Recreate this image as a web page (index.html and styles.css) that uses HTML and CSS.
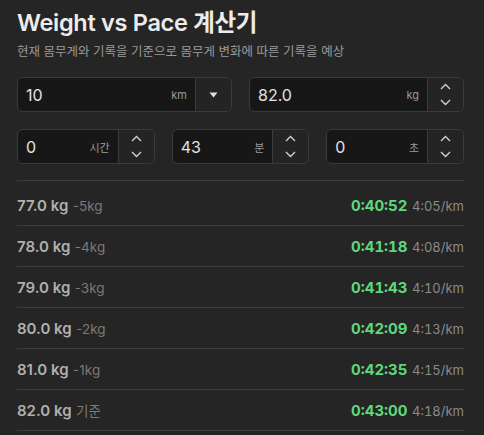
FILE: index.html
```html
<!DOCTYPE html>
<html lang="ko">
<head>
<meta charset="utf-8">
<link rel="stylesheet" href="styles.css">
</head>
<body>
<main class="app">
  <h1 class="title">Weight vs Pace 계산기</h1>
  <p class="subtitle">현재 몸무게와 기록을 기준으로 몸무게 변화에 따른 기록을 예상</p>

  <div class="row two">
    <div class="field">
      <div class="input"><span class="val">10</span><span class="unit">km</span></div>
      <div class="side"><svg width="9" height="6" viewBox="0 0 9 6"><path d="M0.5 0.5h8l-4 5z" fill="#e0e0e0"/></svg></div>
    </div>
    <div class="field">
      <div class="input"><span class="val">82.0</span><span class="unit">kg</span></div>
      <div class="side spin">
        <svg width="11" height="7" viewBox="0 0 11 7"><path d="M1 6l4.5-4.5L10 6" fill="none" stroke="#d0d0d0" stroke-width="1.4"/></svg>
        <svg width="11" height="7" viewBox="0 0 11 7"><path d="M1 1l4.5 4.5L10 1" fill="none" stroke="#d0d0d0" stroke-width="1.4"/></svg>
      </div>
    </div>
  </div>

  <div class="row three">
    <div class="field">
      <div class="input"><span class="val">0</span><span class="unit">시간</span></div>
      <div class="side spin">
        <svg width="11" height="7" viewBox="0 0 11 7"><path d="M1 6l4.5-4.5L10 6" fill="none" stroke="#d0d0d0" stroke-width="1.4"/></svg>
        <svg width="11" height="7" viewBox="0 0 11 7"><path d="M1 1l4.5 4.5L10 1" fill="none" stroke="#d0d0d0" stroke-width="1.4"/></svg>
      </div>
    </div>
    <div class="field">
      <div class="input"><span class="val">43</span><span class="unit">분</span></div>
      <div class="side spin">
        <svg width="11" height="7" viewBox="0 0 11 7"><path d="M1 6l4.5-4.5L10 6" fill="none" stroke="#d0d0d0" stroke-width="1.4"/></svg>
        <svg width="11" height="7" viewBox="0 0 11 7"><path d="M1 1l4.5 4.5L10 1" fill="none" stroke="#d0d0d0" stroke-width="1.4"/></svg>
      </div>
    </div>
    <div class="field">
      <div class="input"><span class="val">0</span><span class="unit">초</span></div>
      <div class="side spin">
        <svg width="11" height="7" viewBox="0 0 11 7"><path d="M1 6l4.5-4.5L10 6" fill="none" stroke="#d0d0d0" stroke-width="1.4"/></svg>
        <svg width="11" height="7" viewBox="0 0 11 7"><path d="M1 1l4.5 4.5L10 1" fill="none" stroke="#d0d0d0" stroke-width="1.4"/></svg>
      </div>
    </div>
  </div>

  <ul class="results">
    <li class="res"><span class="left"><b class="w">77.0 kg</b> <span class="d">-5kg</span></span><span class="right"><b class="t">0:40:52</b> <span class="p">4:05/km</span></span></li>
    <li class="res"><span class="left"><b class="w">78.0 kg</b> <span class="d">-4kg</span></span><span class="right"><b class="t">0:41:18</b> <span class="p">4:08/km</span></span></li>
    <li class="res"><span class="left"><b class="w">79.0 kg</b> <span class="d">-3kg</span></span><span class="right"><b class="t">0:41:43</b> <span class="p">4:10/km</span></span></li>
    <li class="res"><span class="left"><b class="w">80.0 kg</b> <span class="d">-2kg</span></span><span class="right"><b class="t">0:42:09</b> <span class="p">4:13/km</span></span></li>
    <li class="res"><span class="left"><b class="w">81.0 kg</b> <span class="d">-1kg</span></span><span class="right"><b class="t">0:42:35</b> <span class="p">4:15/km</span></span></li>
    <li class="res"><span class="left"><b class="w">82.0 kg</b> <span class="d">기준</span></span><span class="right"><b class="t">0:43:00</b> <span class="p">4:18/km</span></span></li>
  </ul>
</main>
</body>
</html>
```

FILE: styles.css
```css
html, body {
  margin: 0;
  padding: 0;
  background: #252525;
  height: 100%;
  overflow: hidden;
}
body {
  font-family: Inter, "Noto Sans CJK KR", sans-serif;
  color: #e6e6e6;
}
.app {
  width: 447px;
  margin-left: 17px;
  padding-top: 8px;
}
.title {
  margin: 0;
  font-size: 23.5px;
  font-weight: 600;
  line-height: 30px;
  color: #ececec;
  letter-spacing: -0.3px;
}
.subtitle {
  margin: 5px 0 0;
  font-size: 12.5px;
  line-height: 18px;
  color: #9a9a9a;
}
.row {
  display: grid;
  gap: 17px;
}
.row.two { grid-template-columns: 1fr 1fr; margin-top: 16px; }
.row.three { grid-template-columns: 1fr 1fr 1fr; margin-top: 17px; }
.field {
  display: flex;
  height: 35px;
  box-sizing: border-box;
  border: 1px solid #3b3b3b;
  border-radius: 6px;
  overflow: hidden;
}
.input {
  flex: 1;
  display: flex;
  align-items: center;
  justify-content: space-between;
  background: #171717;
  padding: 0 8px 0 8px;
}
.val {
  font-size: 16px;
  color: #e2e2e2;
}
.unit {
  font-size: 11px;
  color: #9a9a9a;
}
.side {
  width: 35px;
  border-left: 1px solid #3b3b3b;
  background: #242424;
  display: flex;
  align-items: center;
  justify-content: center;
}
.side.spin {
  flex-direction: column;
  gap: 9px;
}
.results {
  list-style: none;
  margin: 16px 0 0;
  padding: 4px 0 0;
  border-top: 1px solid #3d3d3d;
}
.res {
  height: 40px;
  border-bottom: 1px solid #3d3d3d;
  display: flex;
  align-items: center;
  justify-content: space-between;
}
.w {
  font-size: 15px;
  font-weight: 600;
  color: #b0b0b0;
}
.d {
  font-size: 13.5px;
  color: #7a7a7a;
}
.t {
  font-size: 15px;
  font-weight: 700;
  color: #5fd77c;
  font-variant-numeric: tabular-nums;
}
.p {
  font-size: 13px;
  color: #8a8a8a;
  font-variant-numeric: tabular-nums;
}
```
